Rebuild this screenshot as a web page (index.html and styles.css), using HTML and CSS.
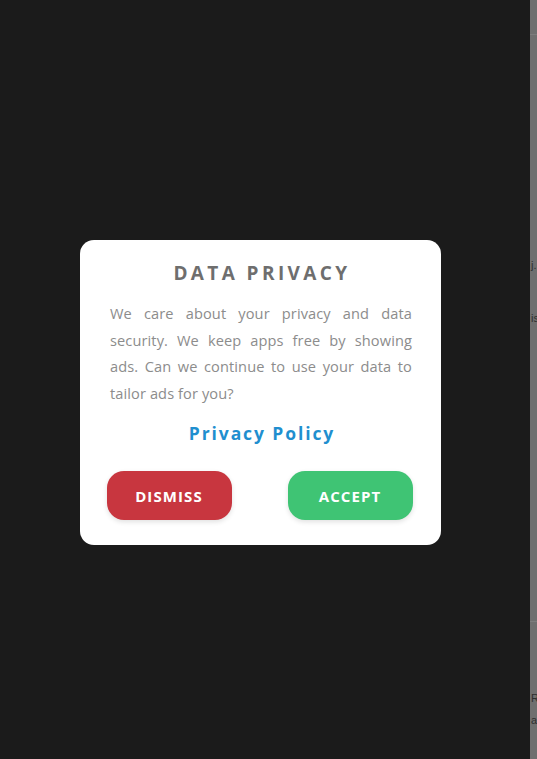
FILE: index.html
```html
<!DOCTYPE html>
<html>
<head>
<meta charset="utf-8">
<link rel="stylesheet" href="styles.css">
</head>
<body>
<div class="screen">
  <main class="stage">
    <section class="card">
      <h1 class="title">DATA PRIVACY</h1>
      <p class="body">We care about your privacy and data security. We keep apps free by showing ads. Can we continue to use your data to tailor ads for you?</p>
      <a class="policy">Privacy Policy</a>
      <div class="actions">
        <button class="btn dismiss">DISMISS</button>
        <button class="btn accept">ACCEPT</button>
      </div>
    </section>
  </main>
  <aside class="strip">
    <div class="rule rule-top"></div>
    <div class="frag frag-1">j.</div>
    <div class="frag frag-2">is</div>
    <div class="rule rule-bottom"></div>
    <div class="frag frag-3">R</div>
    <div class="frag frag-4">a</div>
  </aside>
</div>
</body>
</html>
```

FILE: styles.css
```css
html, body {
  margin: 0;
  padding: 0;
  height: 100%;
  background: #1b1b1b;
}
.screen {
  display: flex;
  width: 537px;
  height: 759px;
  overflow: hidden;
}
.stage {
  width: 530px;
  padding: 240px 0 0 80px;
  box-sizing: border-box;
}
.card {
  width: 361px;
  height: 305px;
  box-sizing: border-box;
  background: #ffffff;
  border-radius: 14px;
  padding: 19px 29px 0 30px;
  display: flex;
  flex-direction: column;
  align-items: center;
  font-family: "Open Sans", "Liberation Sans", sans-serif;
}
.title {
  margin: 0 0 0 2px;
  font-size: 19px;
  font-weight: 700;
  letter-spacing: 3.4px;
  color: #6e6e6e;
  line-height: 28px;
}
.body {
  margin: 13px 0 0 0;
  width: 100%;
  font-size: 14.6px;
  letter-spacing: 0.1px;
  line-height: 26.5px;
  color: #8c8c8c;
  text-align: justify;
}
.policy {
  margin-top: 15px;
  margin-left: 2px;
  font-size: 17.5px;
  font-weight: 700;
  letter-spacing: 1.9px;
  color: #1f8fcf;
  line-height: 24px;
}
.actions {
  margin-top: 26px;
  width: 306px;
  display: flex;
  justify-content: space-between;
  margin-left: -3px;
}
.btn {
  width: 125px;
  height: 49px;
  border: none;
  border-radius: 17px;
  color: #ffffff;
  font-family: "Open Sans", "Liberation Sans", sans-serif;
  font-size: 15px;
  font-weight: 700;
  letter-spacing: 1.1px;
  padding: 0;
  box-shadow: 0 2px 5px rgba(0,0,0,0.12);
}
.dismiss { background: #c8363f; }
.accept { background: #3fc474; }
.strip {
  width: 7px;
  background: #6f6f6f;
  display: flex;
  flex-direction: column;
  overflow: hidden;
  font-family: "Liberation Sans", sans-serif;
  font-size: 11px;
  color: #2e2e2e;
  white-space: nowrap;
}
.rule { height: 1px; background: #7d7d7d; }
.rule-top { margin-top: 34px; }
.frag { line-height: 12px; padding-left: 1px; }
.frag-1 { margin-top: 224px; }
.frag-2 { margin-top: 41px; }
.rule-bottom { margin-top: 297px; }
.frag-3 { margin-top: 70px; }
.frag-4 { margin-top: 10px; }
```
